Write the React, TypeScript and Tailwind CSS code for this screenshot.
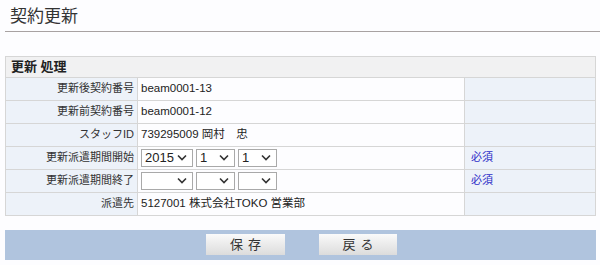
import React from "react";

const font = { fontFamily: '"Liberation Sans", "Noto Sans CJK JP", sans-serif' };

function Select({ value, width }: { value: string; width: string }) {
  return (
    <div
      className={`${width} h-[18px] border border-[#a9a9a9] bg-white flex items-center justify-between pl-[3px] pr-[5px] text-[13px] text-[#222]`}
    >
      <span>{value}</span>
      <svg width="10" height="7" viewBox="0 0 10 7">
        <path d="M1 1.5 L5 5.5 L9 1.5" fill="none" stroke="#333" strokeWidth="1.6" />
      </svg>
    </div>
  );
}

type Row = { label: string; value: React.ReactNode; note?: string };

export default function App() {
  const rows: Row[] = [
    { label: "更新後契約番号", value: "beam0001-13" },
    { label: "更新前契約番号", value: "beam0001-12" },
    { label: "スタッフID", value: "739295009 岡村　忠" },
    {
      label: "更新派遣期間開始",
      value: (
        <div className="flex gap-[3px]">
          <Select value="2015" width="w-[52px]" />
          <Select value="1" width="w-[39px]" />
          <Select value="1" width="w-[39px]" />
        </div>
      ),
      note: "必須",
    },
    {
      label: "更新派遣期間終了",
      value: (
        <div className="flex gap-[3px]">
          <Select value="" width="w-[52px]" />
          <Select value="" width="w-[39px]" />
          <Select value="" width="w-[39px]" />
        </div>
      ),
      note: "必須",
    },
    { label: "派遣先", value: "5127001 株式会社TOKO 営業部" },
  ];

  return (
    <div className="w-[600px] h-[265px] bg-[#fdfdff] text-[#333]" style={font}>
      {/* Title */}
      <div className="pl-[5px] pt-[5px] h-[32px] text-[17px] leading-[24px] text-[#333] border-b border-[#a8a2a2] ml-[5px]">
        契約更新
      </div>

      {/* Table */}
      <div className="pt-[24px] pl-[5px] pr-[4px]">
        <table className="w-[591px] border-collapse text-[12px]">
          <tbody>
            <tr>
              <td
                colSpan={3}
                className="h-[20px] border border-[#d6d6d6] bg-[#f1f1f2] pl-[5px] font-bold text-[13px] text-[#222]"
              >
                更新 処理
              </td>
            </tr>
            {rows.map((r) => (
              <tr key={r.label}>
                <td className="w-[132px] h-[23px] border border-[#d6d6d6] bg-[#edf2f9] text-right pr-[3px] text-[11px] text-[#333]">
                  {r.label}
                </td>
                <td className="w-[327px] border border-[#d6d6d6] bg-[#fdfdff] pl-[3px] text-[11.5px] text-[#222]">
                  {r.value}
                </td>
                <td className="border border-[#d6d6d6] bg-[#edf2f9] pl-[6px] text-[11px] text-[#2f2fc8]">
                  {r.note}
                </td>
              </tr>
            ))}
          </tbody>
        </table>
      </div>

      {/* Button bar */}
      <div className="mt-[14px] ml-[5px] w-[591px] h-[30px] bg-[#b0c4de] flex items-center justify-center gap-[34px] pl-[2px]">
        <button className="w-[79px] h-[21px] bg-gradient-to-b from-[#fafafa] to-[#dcdcdc] text-[13px] text-[#333] tracking-[0.4em] pl-[0.4em]">
          保存
        </button>
        <button className="w-[78px] h-[21px] bg-gradient-to-b from-[#fafafa] to-[#dcdcdc] text-[13px] text-[#333] tracking-[0.4em] pl-[0.4em]">
          戻る
        </button>
      </div>
    </div>
  );
}
